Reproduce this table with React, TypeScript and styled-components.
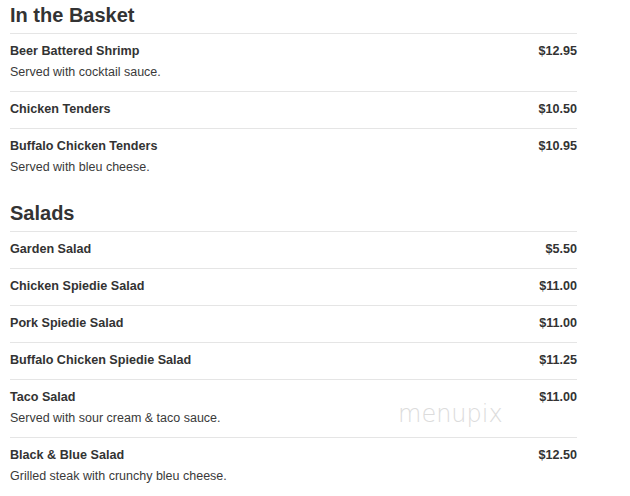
import React from "react";
import styled, { createGlobalStyle } from "styled-components";

const Global = createGlobalStyle`
  html, body { margin: 0; padding: 0; background: #fff; }
  body { font-family: "Liberation Sans", Arial, sans-serif; color: #333; }
`;

const Page = styled.div`
  width: 567px;
  padding: 3px 0 0 10px;
  position: relative;
`;

const Section = styled.section`
  margin-bottom: 15px;
`;

const Heading = styled.h2`
  margin: 0;
  font-size: 20px;
  font-weight: bold;
  line-height: 24px;
  color: #333;
  padding-bottom: 6px;
  border-bottom: 1px solid #e5e5e5;
`;

const Item = styled.div<{ $last?: boolean }>`
  display: grid;
  grid-template-columns: 1fr auto;
  padding: 8px 0 10px;
  border-bottom: ${(p) => (p.$last ? "none" : "1px solid #e5e5e5")};
`;

const Name = styled.div`
  font-size: 12.6px;
  font-weight: bold;
  line-height: 18px;
`;

const Price = styled.div`
  font-size: 12.6px;
  font-weight: bold;
  line-height: 18px;
  text-align: right;
`;

const Desc = styled.div`
  grid-column: 1 / span 2;
  margin-top: 3px;
  font-size: 12.5px;
  line-height: 18px;
  color: #3a3a3a;
`;

const Watermark = styled.div`
  position: absolute;
  left: 398px;
  top: 400px;
  font-family: "DejaVu Sans", sans-serif;
  font-weight: 200;
  font-size: 24px;
  letter-spacing: 0px;
  color: #dcdcdc;
  pointer-events: none;
`;

type MenuItem = { name: string; price: string; desc?: string };

const sections: { title: string; items: MenuItem[] }[] = [
  {
    title: "In the Basket",
    items: [
      { name: "Beer Battered Shrimp", price: "$12.95", desc: "Served with cocktail sauce." },
      { name: "Chicken Tenders", price: "$10.50" },
      { name: "Buffalo Chicken Tenders", price: "$10.95", desc: "Served with bleu cheese." },
    ],
  },
  {
    title: "Salads",
    items: [
      { name: "Garden Salad", price: "$5.50" },
      { name: "Chicken Spiedie Salad", price: "$11.00" },
      { name: "Pork Spiedie Salad", price: "$11.00" },
      { name: "Buffalo Chicken Spiedie Salad", price: "$11.25" },
      { name: "Taco Salad", price: "$11.00", desc: "Served with sour cream & taco sauce." },
      { name: "Black & Blue Salad", price: "$12.50", desc: "Grilled steak with crunchy bleu cheese." },
    ],
  },
];

export default function App() {
  return (
    <>
      <Global />
      <Page>
        {sections.map((s) => (
          <Section key={s.title}>
            <Heading>{s.title}</Heading>
            {s.items.map((it, i) => (
              <Item key={it.name} $last={i === s.items.length - 1}>
                <Name>{it.name}</Name>
                <Price>{it.price}</Price>
                {it.desc && <Desc>{it.desc}</Desc>}
              </Item>
            ))}
          </Section>
        ))}
        <Watermark>menupix</Watermark>
      </Page>
    </>
  );
}
